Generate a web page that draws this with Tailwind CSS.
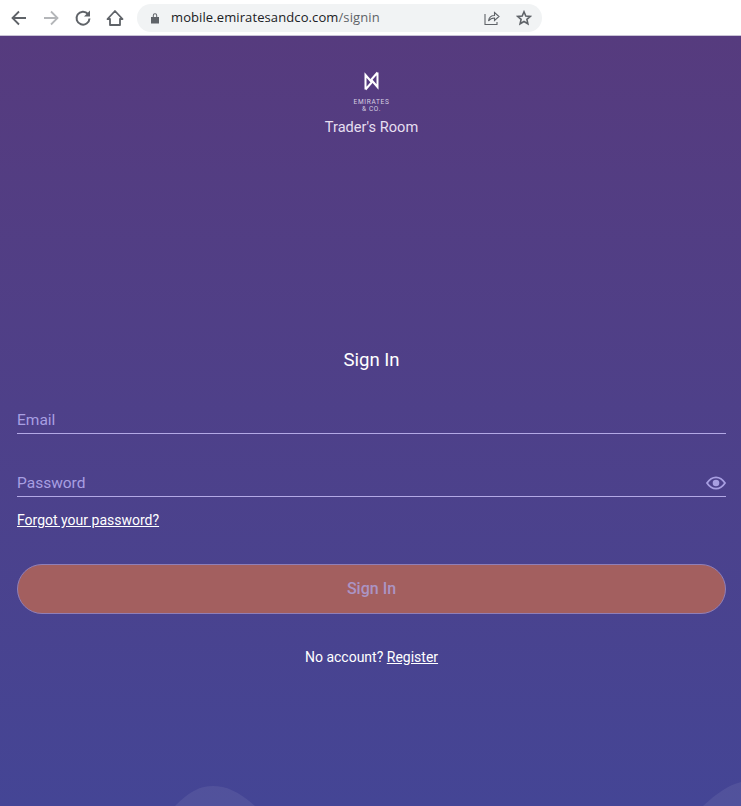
<!DOCTYPE html>
<html lang="en">
<head>
  <meta charset="UTF-8" />
  <meta name="viewport" content="width=device-width, initial-scale=1.0"/>
  <title>Sign In</title>
  <script src="https://cdn.jsdelivr.net/npm/@tailwindcss/browser@4"></script>
</head>
<body class="h-[806px] overflow-hidden bg-white font-['Roboto',sans-serif]">

  <!-- Browser bar -->
  <div class="flex h-[36px] items-center border-b border-[#c9c3d6] bg-white">
    <div class="flex items-center gap-[14px] pl-[10px]">
      <svg class="h-[18px] w-[18px]" viewBox="0 0 18 18" fill="none" stroke="#5f6368" stroke-width="1.8"><path d="M16 9H3M9 2.500 2.500 9 9 15.500"/></svg>
      <svg class="h-[18px] w-[18px]" viewBox="0 0 18 18" fill="none" stroke="#b4b6b9" stroke-width="1.8"><path d="M2 9h13M9 2.500 15.500 9 9 15.500"/></svg>
      <svg class="h-[18px] w-[18px]" viewBox="0 0 18 18" fill="none" stroke="#5f6368" stroke-width="2"><path d="M14 5A6.500 6.500 0 1 0 15.500 9.500"/><path d="M16 1.500v6h-6z" fill="#5f6368" stroke="none"/></svg>
      <svg class="h-[18px] w-[18px]" viewBox="0 0 18 18" fill="none" stroke="#5f6368" stroke-width="1.800"><path d="M9 2 1.500 10H4v6h10v-6h2.500z" stroke-linejoin="round"/></svg>
    </div>
    <div class="ml-[13px] flex h-[28px] w-[405px] items-center rounded-full bg-[#f1f3f4] pl-[12px] pr-[10px]">
      <svg class="h-[12px] w-[12px]" viewBox="0 0 12 12" fill="#5f6368"><path d="M2 5h8v6.500H2zM3.800 5V3.500a2.200 2.200 0 0 1 4.400 0V5H7.200V3.500a1.200 1.200 0 0 0-2.400 0V5z"/></svg>
      <span class="ml-[10px] font-['Open_Sans',sans-serif] text-[13px] tracking-[0.1px] text-[#202124]">mobile.emiratesandco.com<span class="text-[#5f6368]">/signin</span></span>
      <div class="ml-auto flex items-center gap-[16px]">
        <svg class="h-[16px] w-[16px]" viewBox="0 0 16 16" fill="none" stroke="#5f6368" stroke-width="1.100"><path d="M1 4v10.500h12V12"/><path d="M4.500 11C5 7.500 7.500 5.500 10.500 5.500V2.500L15 6.500 10.500 10.500V8C8 8 6 9 4.500 11z"/></svg>
        <svg class="h-[16px] w-[16px]" viewBox="0 0 16 16" fill="none" stroke="#5f6368" stroke-width="1.600"><path d="M8 1.800 9.800 6l4.500.4-3.400 3 1 4.400L8 11.500l-3.900 2.300 1-4.400-3.400-3L6.200 6z"/></svg>
      </div>
    </div>
  </div>

  <!-- Page -->
  <main class="relative h-[770px] overflow-hidden bg-gradient-to-b from-[#563b7e] to-[#444595] pl-[17px] pr-[15px]">
    <svg class="absolute bottom-0 left-0 h-[30px] w-[741px]" viewBox="0 0 741 30" fill="#ffffff" fill-opacity="0.07">
      <path d="M175 30C190 15 200 10 213 10S238 15 255 30Z"/>
      <path d="M703 30C716 18 728 9 741 6V30Z"/>
    </svg>

    <div class="relative flex flex-col items-center pt-[35px]">
      <svg class="h-[20px] w-[15px]" viewBox="0 0 15 20" fill="none" stroke="#ffffff" stroke-width="2"><path d="M1.500 18.500V4L8 11.500M1.500 18.500 8.500 10.500"/><path d="M13.500 1.500V16L7 8.500M13.500 1.500 6.500 9.500"/></svg>
      <span class="mt-[8px] text-[6.500px] leading-[7px] tracking-[0.7px] text-[#d6cfe0]">EMIRATES</span>
      <span class="text-[6.500px] leading-[7px] tracking-[0.7px] text-[#d6cfe0]">&amp; CO.</span>
      <span class="mt-[4px] text-[14.600px] leading-[20px] text-[#e6dff0]">Trader's Room</span>
    </div>

    <h1 class="relative mt-[211px] text-center text-[18.600px] leading-[24px] text-white">Sign In</h1>

    <form class="relative mt-[27px]">
      <label class="flex h-[35px] items-end border-b border-[#b3a9e6] pb-[1px] text-[15.500px] leading-[24px] text-[#a89fe2]">Email</label>
      <label class="mt-[28px] flex h-[35px] items-end justify-between border-b border-[#b3a9e6] pb-[1px] text-[15.500px] leading-[24px] text-[#a89fe2]">
        Password
        <svg class="mb-[5px] h-[14px] w-[20px]" viewBox="0 0 20 14" fill="none" stroke="#a89fe2" stroke-width="1.800"><path d="M1 7c2.500-3.800 5.500-5.700 9-5.700s6.500 1.900 9 5.700c-2.500 3.800-5.500 5.700-9 5.700S3.500 10.800 1 7z"/><circle cx="10" cy="7" r="3.300" fill="#a89fe2" stroke="none"/></svg>
      </label>
      <a href="#" class="mt-[14px] block text-[14px] leading-[18px] text-white underline">Forgot your password?</a>
      <button type="button" class="mt-[35px] h-[50px] w-full rounded-full border border-[#8f7fb8] bg-[#a35f5f] text-[16px] font-medium text-[#ab94c4]">Sign In</button>
      <p class="mt-[34px] text-center text-[14px] leading-[18px] text-white">No account? <a href="#" class="underline">Register</a></p>
    </form>
  </main>

</body>
</html>
